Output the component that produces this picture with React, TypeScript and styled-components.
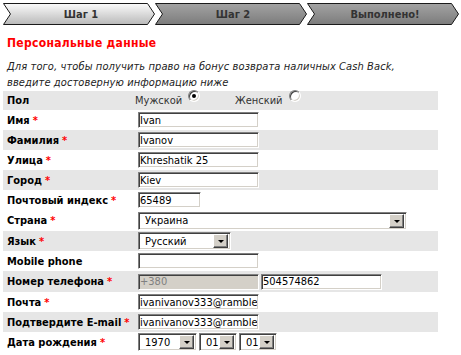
import React from 'react';
import styled, { createGlobalStyle } from 'styled-components';

const GlobalStyle = createGlobalStyle`
  html, body { margin: 0; padding: 0; background: #ffffff; }
  body { font-family: "DejaVu Sans", Tahoma, sans-serif; }
`;

const Page = styled.div`
  width: 461px;
  height: 355px;
  overflow: hidden;
  box-sizing: border-box;
  padding: 3px 0 0 3px;
`;

const Steps = styled.div`
  display: flex;
  height: 22px;
`;

const Step = styled.div`
  position: relative;
  width: 152px;
  height: 22px;
  display: flex;
  align-items: center;
  justify-content: center;
  font: bold 11px "DejaVu Sans Condensed", "DejaVu Sans", sans-serif;
  color: #333333;
`;

const StepShape = styled.svg`
  position: absolute;
  left: 0;
  top: 0;
`;

const StepLabel = styled.span`
  position: relative;
  padding-left: 4px;
`;

const Title = styled.h2`
  margin: 10px 0 0 4px;
  font: bold 12px "DejaVu Sans Condensed", "DejaVu Sans", sans-serif;
  letter-spacing: 0.3px;
  line-height: 16px;
  color: #ff0000;
`;

const Intro = styled.p`
  margin: 8px 0 0 4px;
  font: oblique 11px "DejaVu Sans Condensed", "DejaVu Sans", sans-serif;
  letter-spacing: 0.1px;
  line-height: 16px;
  color: #222222;
`;

const Form = styled.div`
  width: 435px;
  display: flex;
  flex-direction: column;
`;

const Row = styled.div<{ $shaded?: boolean; $h?: number }>`
  display: grid;
  grid-template-columns: 135px 1fr;
  align-items: center;
  height: ${(p) => p.$h ?? 20}px;
  background: ${(p) => (p.$shaded ? '#e6e6e6' : '#ffffff')};
`;

const Label = styled.div`
  padding-left: 4px;
  font: bold 11px "DejaVu Sans Condensed", "DejaVu Sans", sans-serif;
  color: #000000;
  white-space: nowrap;
`;

const Req = styled.span`
  color: #ff0000;
  margin-left: 3px;
`;

const Field = styled.div`
  display: flex;
  align-items: center;
  gap: 2px;
`;

const Input = styled.input<{ $w?: number }>`
  box-sizing: border-box;
  width: ${(p) => p.$w ?? 121}px;
  height: 16px;
  margin: 0;
  padding: 0 1px;
  border: 1px solid;
  border-color: #808080 #ffffff #ffffff #808080;
  box-shadow: inset 1px 1px 0 #404040, inset -1px -1px 0 #d4d0c8;
  background: ${(p) => (p.disabled ? '#d4d0c8' : '#ffffff')};
  font: 11px "DejaVu Sans Condensed", "DejaVu Sans", sans-serif;
  color: ${(p) => (p.disabled ? '#808080' : '#000000')};
  outline: none;
`;

const Select = styled.div<{ $w: number }>`
  box-sizing: border-box;
  width: ${(p) => p.$w}px;
  height: 18px;
  display: flex;
  align-items: center;
  border: 1px solid;
  border-color: #808080 #ffffff #ffffff #808080;
  box-shadow: inset 1px 1px 0 #404040, inset -1px -1px 0 #d4d0c8;
  background: #ffffff;
  padding: 2px 2px 2px 6px;
  font: 11px "DejaVu Sans Condensed", "DejaVu Sans", sans-serif;
  color: #000000;
`;

const SelectValue = styled.span`
  flex: 1;
  overflow: hidden;
  white-space: nowrap;
`;

const SelectButton = styled.span`
  box-sizing: border-box;
  width: 15px;
  height: 14px;
  display: flex;
  align-items: center;
  justify-content: center;
  background: #d4d0c8;
  border: 1px solid;
  border-color: #ffffff #404040 #404040 #ffffff;
  box-shadow: inset -1px -1px 0 #808080;
  &::after {
    content: '';
    border-left: 3px solid transparent;
    border-right: 3px solid transparent;
    border-top: 3px solid #000000;
    margin-top: 1px;
  }
`;

const Gender = styled.div`
  display: flex;
  align-items: flex-start;
  margin-left: -3px;
  font: 11px "DejaVu Sans Condensed", "DejaVu Sans", sans-serif;
  color: #333333;
`;

const Choice = styled.label`
  display: flex;
  align-items: flex-start;
  gap: 6px;
  width: 100px;
`;

const Radio = styled.span<{ $checked?: boolean }>`
  position: relative;
  box-sizing: border-box;
  width: 12px;
  height: 12px;
  margin-top: -4px;
  border-radius: 50%;
  border: 1px solid;
  border-color: #808080 #ffffff #ffffff #808080;
  box-shadow: inset 1px 1px 0 #404040, inset -1px -1px 0 #d4d0c8;
  background: #ffffff;
  &::after {
    content: '';
    display: ${(p) => (p.$checked ? 'block' : 'none')};
    position: absolute;
    left: 3px;
    top: 3px;
    width: 4px;
    height: 4px;
    border-radius: 50%;
    background: #000000;
  }
`;

const steps = [
  { label: 'Шаг 1', from: '#fbfbfb', to: '#b9b9b9' },
  { label: 'Шаг 2', from: '#a3a3a3', to: '#7c7c7c' },
  { label: 'Выполнено!', from: '#a3a3a3', to: '#7c7c7c' },
];

function StepTab({ label, from, to, id }: { label: string; from: string; to: string; id: string }) {
  return (
    <Step>
      <StepShape width="152" height="22" viewBox="0 0 152 22">
        <defs>
          <linearGradient id={id} x1="0" y1="0" x2="0" y2="1">
            <stop offset="0" stopColor={from} />
            <stop offset="1" stopColor={to} />
          </linearGradient>
        </defs>
        <polygon
          points="0.5,0.5 144.5,0.5 151.5,11 144.5,21.5 0.5,21.5 7.5,11"
          fill={`url(#${id})`}
          stroke="#1a1a1a"
          strokeWidth="1"
        />
      </StepShape>
      <StepLabel>{label}</StepLabel>
    </Step>
  );
}

function Dropdown({ w, value }: { w: number; value: string }) {
  return (
    <Select $w={w}>
      <SelectValue>{value}</SelectValue>
      <SelectButton />
    </Select>
  );
}

export default function App() {
  return (
    <Page>
      <GlobalStyle />
      <Steps>
        {steps.map((s, i) => (
          <StepTab key={s.label} id={`step-grad-${i}`} {...s} />
        ))}
      </Steps>
      <Title>Персональные данные</Title>
      <Intro>
        Для того, чтобы получить право на бонус возврата наличных Cash Back,
        <br />
        введите достоверную информацию ниже
      </Intro>
      <Form>
        <Row $shaded $h={19}>
          <Label>Пол</Label>
          <Gender>
            <Choice>
              Мужской <Radio $checked />
            </Choice>
            <Choice>
              Женский <Radio />
            </Choice>
          </Gender>
        </Row>
        <Row>
          <Label>Имя<Req>*</Req></Label>
          <Field><Input readOnly defaultValue="Ivan" /></Field>
        </Row>
        <Row $shaded>
          <Label>Фамилия<Req>*</Req></Label>
          <Field><Input readOnly defaultValue="Ivanov" /></Field>
        </Row>
        <Row>
          <Label>Улица<Req>*</Req></Label>
          <Field><Input readOnly defaultValue="Khreshatik 25" /></Field>
        </Row>
        <Row $shaded>
          <Label>Город<Req>*</Req></Label>
          <Field><Input readOnly defaultValue="Kiev" /></Field>
        </Row>
        <Row>
          <Label>Почтовый индекс<Req>*</Req></Label>
          <Field><Input $w={63} readOnly defaultValue="65489" /></Field>
        </Row>
        <Row $h={21}>
          <Label>Страна<Req>*</Req></Label>
          <Field><Dropdown w={269} value="Украина" /></Field>
        </Row>
        <Row $shaded>
          <Label>Язык<Req>*</Req></Label>
          <Field><Dropdown w={93} value="Русский" /></Field>
        </Row>
        <Row>
          <Label>Mobile phone</Label>
          <Field><Input readOnly defaultValue="" /></Field>
        </Row>
        <Row $shaded $h={21}>
          <Label>Номер телефона<Req>*</Req></Label>
          <Field>
            <Input disabled defaultValue="+380" />
            <Input readOnly defaultValue="504574862" />
          </Field>
        </Row>
        <Row>
          <Label>Почта<Req>*</Req></Label>
          <Field><Input readOnly defaultValue="ivanivanov333@rambler.ru" /></Field>
        </Row>
        <Row $shaded>
          <Label>Подтвердите E-mail<Req>*</Req></Label>
          <Field><Input readOnly defaultValue="ivanivanov333@rambler.ru" /></Field>
        </Row>
        <Row>
          <Label>Дата рождения<Req>*</Req></Label>
          <Field>
            <Dropdown w={59} value="1970" />
            <Dropdown w={38} value="01" />
            <Dropdown w={38} value="01" />
          </Field>
        </Row>
      </Form>
    </Page>
  );
}
